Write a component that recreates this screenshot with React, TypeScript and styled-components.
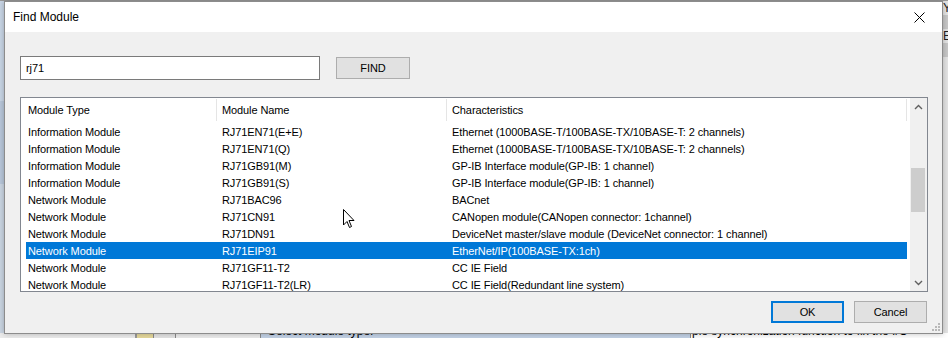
import React from 'react';
import styled, { createGlobalStyle } from 'styled-components';

const GlobalStyle = createGlobalStyle`
  html, body {
    margin: 0;
    padding: 0;
    background: #ececec;
  }
  body {
    font-family: "Liberation Sans", Arial, sans-serif;
    font-size: 11px;
    color: #000;
  }
`;

type Row = {
  type: string;
  name: string;
  info: string;
};

const rows: Row[] = [
  { type: 'Information Module', name: 'RJ71EN71(E+E)', info: 'Ethernet (1000BASE-T/100BASE-TX/10BASE-T: 2 channels)' },
  { type: 'Information Module', name: 'RJ71EN71(Q)', info: 'Ethernet (1000BASE-T/100BASE-TX/10BASE-T: 2 channels)' },
  { type: 'Information Module', name: 'RJ71GB91(M)', info: 'GP-IB Interface module(GP-IB: 1 channel)' },
  { type: 'Information Module', name: 'RJ71GB91(S)', info: 'GP-IB Interface module(GP-IB: 1 channel)' },
  { type: 'Network Module', name: 'RJ71BAC96', info: 'BACnet' },
  { type: 'Network Module', name: 'RJ71CN91', info: 'CANopen module(CANopen connector: 1channel)' },
  { type: 'Network Module', name: 'RJ71DN91', info: 'DeviceNet master/slave module (DeviceNet connector: 1 channel)' },
  { type: 'Network Module', name: 'RJ71EIP91', info: 'EtherNet/IP(100BASE-TX:1ch)' },
  { type: 'Network Module', name: 'RJ71GF11-T2', info: 'CC IE Field' },
  { type: 'Network Module', name: 'RJ71GF11-T2(LR)', info: 'CC IE Field(Redundant line system)' },
];

const SELECTED = 7;

/* ---------- backdrop (the application behind the dialog) ---------- */

const Screen = styled.div`
  position: relative;
  width: 948px;
  height: 338px;
  overflow: hidden;
`;

const Backdrop = styled.div`
  display: flex;
  flex-direction: column;
  width: 100%;
  height: 100%;
`;

const BackTop = styled.div`
  flex: 1;
  display: flex;
  border-top: 1px solid #9a9a9a;
`;

const LeftRail = styled.div`
  width: 4px;
  background: linear-gradient(#c9d6e6 0 30%, #b9c8db 30% 55%, #cbd6e3 55% 100%);
`;

const Center = styled.div`
  flex: 1;
  background: #e9e9e9;
`;

const RightRail = styled.div`
  width: 6px;
  display: flex;
  flex-direction: column;
  background: #e4e4e4;
  font-size: 12px;
  line-height: 14px;
  color: #222;
  overflow: hidden;
`;

const RailBand = styled.div<{ $dark?: boolean }>`
  height: 14px;
  background: ${(p) => (p.$dark ? '#c8c8c8' : 'transparent')};
  padding-left: 1px;
`;

const BackBottom = styled.div`
  height: 5px;
  display: grid;
  grid-template-columns: 135px 2px 16px 22px 85px 430px 1fr;
  background: #ececec;
  overflow: hidden;
`;

const Seg = styled.div<{ $bg: string; $line?: boolean }>`
  background: ${(p) => p.$bg};
  border-left: ${(p) => (p.$line ? '1px solid #8a8a8a' : 'none')};
  overflow: hidden;
  white-space: nowrap;
`;

const BackText = styled.div<{ $pad: number }>`
  margin-top: -8px;
  padding-left: ${(p) => p.$pad}px;
  font-size: 12px;
  line-height: 12px;
  color: #000;
`;

/* ---------- dialog ---------- */

const Dialog = styled.div`
  position: absolute;
  left: 4px;
  top: 1px;
  width: 939px;
  height: 333px;
  box-sizing: border-box;
  border: 1px solid #8c8c8c;
  background: #f0f0f0;
  box-shadow: 0 0 6px rgba(0, 0, 0, 0.25);
  display: flex;
  flex-direction: column;
`;

const TitleBar = styled.div`
  height: 30px;
  flex: none;
  background: #fff;
  display: flex;
  align-items: center;
  justify-content: space-between;
  padding-left: 8px;
`;

const Title = styled.span`
  font-size: 12px;
  color: #000;
`;

const CloseButton = styled.div`
  width: 46px;
  height: 30px;
  display: flex;
  align-items: center;
  justify-content: center;
`;

const Body = styled.div`
  flex: 1;
  padding: 24px 0 0 15px;
  display: flex;
  flex-direction: column;
  letter-spacing: -0.1px;
`;

const SearchRow = styled.div`
  display: flex;
  align-items: center;
  gap: 16px;
`;

const SearchInput = styled.div`
  width: 300px;
  height: 24px;
  box-sizing: border-box;
  border: 1px solid #7a7a7a;
  background: #fff;
  padding-left: 5px;
  display: flex;
  align-items: center;
  font-size: 11px;
`;

const Button = styled.div<{ $default?: boolean; $width: number }>`
  width: ${(p) => p.$width}px;
  height: 22px;
  box-sizing: border-box;
  border: ${(p) => (p.$default ? '2px solid #0078d7' : '1px solid #adadad')};
  background: #e1e1e1;
  display: flex;
  align-items: center;
  justify-content: center;
  font-size: 11px;
`;

const ListBox = styled.div`
  margin-top: 17px;
  width: 908px;
  height: 195px;
  box-sizing: border-box;
  border: 1px solid #828790;
  background: #fff;
  display: flex;
`;

const ListContent = styled.div`
  flex: 1;
  overflow: hidden;
`;

const HeaderRow = styled.div`
  height: 25px;
  display: grid;
  grid-template-columns: 196px 230px 460px;
`;

const HeaderCell = styled.div<{ $pad: number }>`
  border-right: 1px solid #e5e5e5;
  margin: 1px 0 2px;
  padding-left: ${(p) => p.$pad}px;
  display: flex;
  align-items: center;
  white-space: nowrap;
`;

const ItemRow = styled.div<{ $selected?: boolean }>`
  height: 17px;
  margin-left: 5px;
  width: 881px;
  display: grid;
  grid-template-columns: 191px 230px 460px;
  align-items: center;
  background: ${(p) => (p.$selected ? '#0078d7' : 'transparent')};
  color: ${(p) => (p.$selected ? '#fff' : '#000')};
`;

const ItemCell = styled.div<{ $pad: number }>`
  padding-left: ${(p) => p.$pad}px;
  white-space: nowrap;
  overflow: hidden;
`;

const ScrollBar = styled.div`
  width: 17px;
  flex: none;
  background: #f0f0f0;
  display: flex;
  flex-direction: column;
`;

const ScrollArrow = styled.div`
  height: 17px;
  display: flex;
  align-items: center;
  justify-content: center;
`;

const ScrollTrack = styled.div`
  flex: 1;
  display: flex;
  flex-direction: column;
  padding-top: 53px;
`;

const Thumb = styled.div`
  margin: 0 2px 0 1px;
  height: 44px;
  background: #cdcdcd;
`;

const ButtonRow = styled.div`
  margin-top: 9px;
  width: 907px;
  display: flex;
  justify-content: flex-end;
  gap: 10px;
`;

const SizeGrip = styled.svg`
  position: absolute;
  right: 1px;
  bottom: 1px;
`;

const Cursor = styled.svg`
  position: absolute;
  left: 343px;
  top: 209px;
`;

const Chevron = ({ up }: { up?: boolean }) => (
  <svg width="9" height="6" viewBox="0 0 9 6">
    <path
      d={up ? 'M1 5 L4.5 1.5 L8 5' : 'M1 1 L4.5 4.5 L8 1'}
      fill="none"
      stroke="#606060"
      strokeWidth="1.4"
    />
  </svg>
);

export default function App() {
  return (
    <Screen>
      <GlobalStyle />
      <Backdrop>
        <BackTop>
          <LeftRail />
          <Center />
          <RightRail>
            <RailBand>Y</RailBand>
            <RailBand $dark />
            <RailBand>E</RailBand>
            <RailBand $dark />
          </RightRail>
        </BackTop>
        <BackBottom>
          <Seg $bg="#ececec" />
          <Seg $bg="#9a9a9a" />
          <Seg $bg="#e6d99c" />
          <Seg $bg="#e4e4e4" $line />
          <Seg $bg="#ececec" $line />
          <Seg $bg="#c3d2e6" $line>
            <BackText $pad={7}>Select module type.</BackText>
          </Seg>
          <Seg $bg="#ffffff" $line>
            <BackText $pad={1}>ple synchronization function to fix the I/O</BackText>
          </Seg>
        </BackBottom>
      </Backdrop>

      <Dialog>
        <TitleBar>
          <Title>Find Module</Title>
          <CloseButton>
            <svg width="11" height="11" viewBox="0 0 11 11">
              <path d="M0.5 0.5 L10.5 10.5 M10.5 0.5 L0.5 10.5" stroke="#000" strokeWidth="1" />
            </svg>
          </CloseButton>
        </TitleBar>
        <Body>
          <SearchRow>
            <SearchInput>rj71</SearchInput>
            <Button $width={74}>FIND</Button>
          </SearchRow>
          <ListBox>
            <ListContent>
              <HeaderRow>
                <HeaderCell $pad={7}>Module Type</HeaderCell>
                <HeaderCell $pad={5}>Module Name</HeaderCell>
                <HeaderCell $pad={5}>Characteristics</HeaderCell>
              </HeaderRow>
              {rows.map((row, index) => (
                <ItemRow key={index} $selected={index === SELECTED}>
                  <ItemCell $pad={2}>{row.type}</ItemCell>
                  <ItemCell $pad={5}>{row.name}</ItemCell>
                  <ItemCell $pad={5}>{row.info}</ItemCell>
                </ItemRow>
              ))}
            </ListContent>
            <ScrollBar>
              <ScrollArrow>
                <Chevron up />
              </ScrollArrow>
              <ScrollTrack>
                <Thumb />
              </ScrollTrack>
              <ScrollArrow>
                <Chevron />
              </ScrollArrow>
            </ScrollBar>
          </ListBox>
          <ButtonRow>
            <Button $default $width={73}>OK</Button>
            <Button $width={73}>Cancel</Button>
          </ButtonRow>
        </Body>
        <SizeGrip width="10" height="10" viewBox="0 0 10 10">
          {[
            [7, 1],
            [4, 4],
            [7, 4],
            [1, 7],
            [4, 7],
            [7, 7],
          ].map(([x, y], i) => (
            <rect key={i} x={x} y={y} width="2" height="2" fill="#b8b8b8" />
          ))}
        </SizeGrip>
      </Dialog>

      <Cursor width="13" height="20" viewBox="0 0 13 20">
        <path
          d="M0.5 0.5 L0.5 16 L4 12.5 L6.5 18.5 L8.5 17.5 L6 11.5 L11 11.5 Z"
          fill="#fff"
          stroke="#000"
          strokeWidth="1"
          strokeLinejoin="miter"
        />
      </Cursor>
    </Screen>
  );
}
